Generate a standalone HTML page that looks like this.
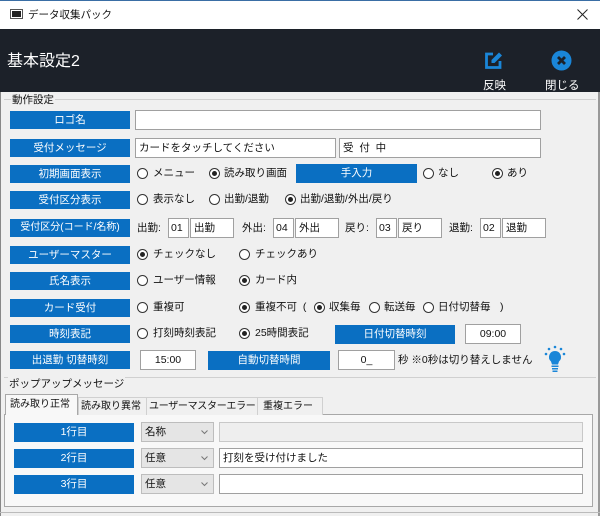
<!DOCTYPE html>
<html><head><meta charset="utf-8">
<style>
*{box-sizing:border-box;margin:0;padding:0}
body{width:600px;height:516px;background:#f0f0f0;font-family:"Liberation Sans","Noto Sans CJK JP",sans-serif;font-size:10.5px;color:#111;position:relative;overflow:hidden}
.a{position:absolute}
.t{position:absolute;white-space:nowrap;line-height:14px}
.b{position:absolute;background:#0a6fc2;color:#fff;text-align:center;font-size:10.5px;height:18px;line-height:18px}
.i{position:absolute;background:#fff;border:1px solid #a0a0a0;height:20px;line-height:18px;padding-left:3px;white-space:nowrap}
.r{position:absolute;width:11px;height:11px;border:1px solid #333;border-radius:50%;background:#fff}
.r.on::after{content:"";position:absolute;left:2px;top:2px;width:5px;height:5px;border-radius:50%;background:#222}
.s{position:absolute;background:#e5e5e5;border:1px solid #bdbdbd;height:20px;line-height:18px;padding-left:3px}
.s svg{position:absolute;right:5px;top:7px}
</style></head><body>
<div class="a" style="left:0;top:0;width:600px;height:29px;background:#fff;border-top:1px solid #3a6ea5"></div>
<div class="a" style="left:10px;top:9px;width:13px;height:10px;border:1px solid #555;background:#fff"><div style="margin:1px;height:6px;background:#222"></div></div>
<div class="t" style="left:28px;top:8px;font-size:10.5px">データ収集パック</div>
<svg class="a" style="left:577px;top:9px" width="11" height="11" viewBox="0 0 11 11"><path d="M0.5 0.5l10 10M10.5 0.5l-10 10" stroke="#222" stroke-width="1"/></svg>
<div class="a" style="left:0;top:29px;width:600px;height:63px;background:#1c2129"></div>
<div class="t" style="left:7px;top:52px;font-size:16px;line-height:20px;color:#fff">基本設定2</div>
<svg class="a" style="left:484px;top:51px" width="19" height="19" viewBox="0 0 19 19"><path d="M9 3H2.5v13.5H16V10" fill="none" stroke="#1a86d8" stroke-width="2.8"/><path d="M15 1.5l3 3-7.5 7.5H7.5V9z" fill="#1a86d8"/></svg>
<div class="t" style="left:483px;top:79px;color:#fff;font-size:11.5px">反映</div>
<svg class="a" style="left:551px;top:50px" width="21" height="21" viewBox="0 0 21 21"><circle cx="10.5" cy="10.5" r="10" fill="#1a86d8"/><path d="M7 7l7 7M14 7l-7 7" stroke="#1c2129" stroke-width="2.8"/></svg>
<div class="t" style="left:545px;top:79px;color:#fff;font-size:11.5px">閉じる</div>
<div class="a" style="left:0;top:92px;width:1px;height:424px;background:#888"></div>
<div class="a" style="left:598px;top:92px;width:2px;height:424px;background:#999"></div>
<div class="a" style="left:4px;top:99px;width:592px;height:1px;background:#d0d0d0"></div>
<div class="t" style="left:11px;top:93px;background:#f0f0f0;padding:0 1px">動作設定</div>

<div class="b" style="left:10px;top:111px;width:120px">ロゴ名</div>
<div class="i" style="left:135px;top:110px;width:406px"></div>

<div class="b" style="left:10px;top:139px;width:120px">受付メッセージ</div>
<div class="i" style="left:135px;top:138px;width:201px">カードをタッチしてください</div>
<div class="i" style="left:339px;top:138px;width:202px">受&nbsp;&nbsp;付&nbsp;&nbsp;中</div>

<div class="b" style="left:10px;top:165px;width:120px">初期画面表示</div>
<div class="r" style="left:137px;top:168px"></div><div class="t" style="left:153px;top:166px">メニュー</div>
<div class="r on" style="left:209px;top:168px"></div><div class="t" style="left:224px;top:166px">読み取り画面</div>
<div class="b" style="left:296px;top:164px;width:121px;height:19px">手入力</div>
<div class="r" style="left:423px;top:168px"></div><div class="t" style="left:438px;top:166px">なし</div>
<div class="r on" style="left:492px;top:168px"></div><div class="t" style="left:507px;top:166px">あり</div>

<div class="b" style="left:10px;top:191px;width:120px">受付区分表示</div>
<div class="r" style="left:137px;top:194px"></div><div class="t" style="left:153px;top:192px">表示なし</div>
<div class="r" style="left:209px;top:194px"></div><div class="t" style="left:224px;top:192px">出勤/退勤</div>
<div class="r on" style="left:285px;top:194px"></div><div class="t" style="left:300px;top:192px">出勤/退勤/外出/戻り</div>

<div class="b" style="left:10px;top:219px;width:120px;font-size:10px">受付区分(コード/名称)</div>
<div class="t" style="left:137px;top:221px">出勤:</div><div class="i" style="left:168px;top:218px;width:21px;padding-left:2px">01</div><div class="i" style="left:190px;top:218px;width:44px">出勤</div>
<div class="t" style="left:242px;top:221px">外出:</div><div class="i" style="left:273px;top:218px;width:21px;padding-left:2px">04</div><div class="i" style="left:295px;top:218px;width:44px">外出</div>
<div class="t" style="left:345px;top:221px">戻り:</div><div class="i" style="left:376px;top:218px;width:21px;padding-left:2px">03</div><div class="i" style="left:398px;top:218px;width:44px">戻り</div>
<div class="t" style="left:449px;top:221px">退勤:</div><div class="i" style="left:480px;top:218px;width:21px;padding-left:2px">02</div><div class="i" style="left:502px;top:218px;width:44px">退勤</div>

<div class="b" style="left:10px;top:246px;width:120px">ユーザーマスター</div>
<div class="r on" style="left:137px;top:249px"></div><div class="t" style="left:153px;top:247px">チェックなし</div>
<div class="r" style="left:239px;top:249px"></div><div class="t" style="left:255px;top:247px">チェックあり</div>

<div class="b" style="left:10px;top:272px;width:120px">氏名表示</div>
<div class="r" style="left:137px;top:275px"></div><div class="t" style="left:153px;top:273px">ユーザー情報</div>
<div class="r on" style="left:239px;top:275px"></div><div class="t" style="left:255px;top:273px">カード内</div>

<div class="b" style="left:10px;top:299px;width:120px">カード受付</div>
<div class="r" style="left:137px;top:302px"></div><div class="t" style="left:153px;top:300px">重複可</div>
<div class="r on" style="left:239px;top:302px"></div><div class="t" style="left:255px;top:300px">重複不可&nbsp;&nbsp;(</div>
<div class="r on" style="left:314px;top:302px"></div><div class="t" style="left:329px;top:300px">収集毎</div>
<div class="r" style="left:369px;top:302px"></div><div class="t" style="left:384px;top:300px">転送毎</div>
<div class="r" style="left:423px;top:302px"></div><div class="t" style="left:438px;top:300px">日付切替毎</div>
<div class="t" style="left:500px;top:300px">)</div>

<div class="b" style="left:10px;top:325px;width:120px">時刻表記</div>
<div class="r" style="left:137px;top:328px"></div><div class="t" style="left:153px;top:326px">打刻時刻表記</div>
<div class="r on" style="left:239px;top:328px"></div><div class="t" style="left:255px;top:326px">25時間表記</div>
<div class="b" style="left:335px;top:325px;width:120px;height:19px">日付切替時刻</div>
<div class="i" style="left:465px;top:324px;width:56px;text-align:center;padding:0">09:00</div>

<div class="b" style="left:10px;top:351px;width:120px">出退勤 切替時刻</div>
<div class="i" style="left:140px;top:350px;width:56px;text-align:center;padding:0">15:00</div>
<div class="b" style="left:208px;top:351px;width:122px;height:19px">自動切替時間</div>
<div class="i" style="left:338px;top:350px;width:57px;text-align:center;padding:0">0_</div>
<div class="t" style="left:398px;top:353px">秒 ※0秒は切り替えしません</div>
<svg class="a" style="left:540px;top:344px" width="30" height="30" viewBox="0 0 30 30"><g fill="#1a86d8"><circle cx="15" cy="3" r="1.3"/><circle cx="9" cy="5" r="1.3"/><circle cx="21" cy="5" r="1.3"/><circle cx="6" cy="10" r="1.3"/><circle cx="24" cy="10" r="1.3"/><path d="M15 7a6 6 0 0 0-4 10.5l1 3h6l1-3A6 6 0 0 0 15 7z"/><rect x="11.5" y="21.5" width="7" height="1.5"/><rect x="12" y="24" width="6" height="1.5"/><rect x="12.5" y="26.5" width="5" height="1.5"/></g></svg>

<div class="a" style="left:4px;top:377px;width:592px;height:1px;background:#d0d0d0"></div>
<div class="t" style="left:8px;top:377px;background:#f0f0f0;padding:0 1px">ポップアップメッセージ</div>

<div class="a" style="left:4px;top:414px;width:589px;height:93px;border:1px solid #a8a8a8;background:#f8f8f8"></div>
<div class="a" style="left:78px;top:397px;width:69px;height:18px;border:1px solid #d0d0d0;border-bottom:none;background:#f0f0f0"></div><div class="t" style="left:81px;top:400px;font-size:10px">読み取り異常</div>
<div class="a" style="left:146px;top:397px;width:112px;height:18px;border:1px solid #d0d0d0;border-bottom:none;background:#f0f0f0"></div><div class="t" style="left:149px;top:400px;font-size:10px;letter-spacing:-0.3px">ユーザーマスターエラー</div>
<div class="a" style="left:257px;top:397px;width:66px;height:18px;border:1px solid #d0d0d0;border-bottom:none;background:#f0f0f0"></div><div class="t" style="left:263px;top:400px;font-size:10px">重複エラー</div>
<div class="a" style="left:5px;top:394px;width:73px;height:21px;border:1px solid #a8a8a8;border-bottom:none;background:#f8f8f8"></div><div class="t" style="left:10px;top:398px;font-size:10px">読み取り正常</div>

<div class="b" style="left:14px;top:423px;width:120px;height:19px">1行目</div>
<div class="s" style="left:141px;top:422px;width:73px">名称<svg width="7" height="5" viewBox="0 0 7 5"><path d="M0.5 0.5l3 3 3-3" fill="none" stroke="#777"/></svg></div>
<div class="a" style="left:219px;top:422px;width:364px;height:20px;border:1px solid #c8c8c8;background:#eee"></div>
<div class="b" style="left:14px;top:449px;width:120px;height:19px">2行目</div>
<div class="s" style="left:141px;top:448px;width:73px">任意<svg width="7" height="5" viewBox="0 0 7 5"><path d="M0.5 0.5l3 3 3-3" fill="none" stroke="#777"/></svg></div>
<div class="i" style="left:219px;top:448px;width:364px">打刻を受け付けました</div>
<div class="b" style="left:14px;top:475px;width:120px;height:19px">3行目</div>
<div class="s" style="left:141px;top:474px;width:73px">任意<svg width="7" height="5" viewBox="0 0 7 5"><path d="M0.5 0.5l3 3 3-3" fill="none" stroke="#777"/></svg></div>
<div class="i" style="left:219px;top:474px;width:364px"></div>
<div class="a" style="left:0;top:512px;width:600px;height:1px;background:#bbb"></div>
</body></html>
